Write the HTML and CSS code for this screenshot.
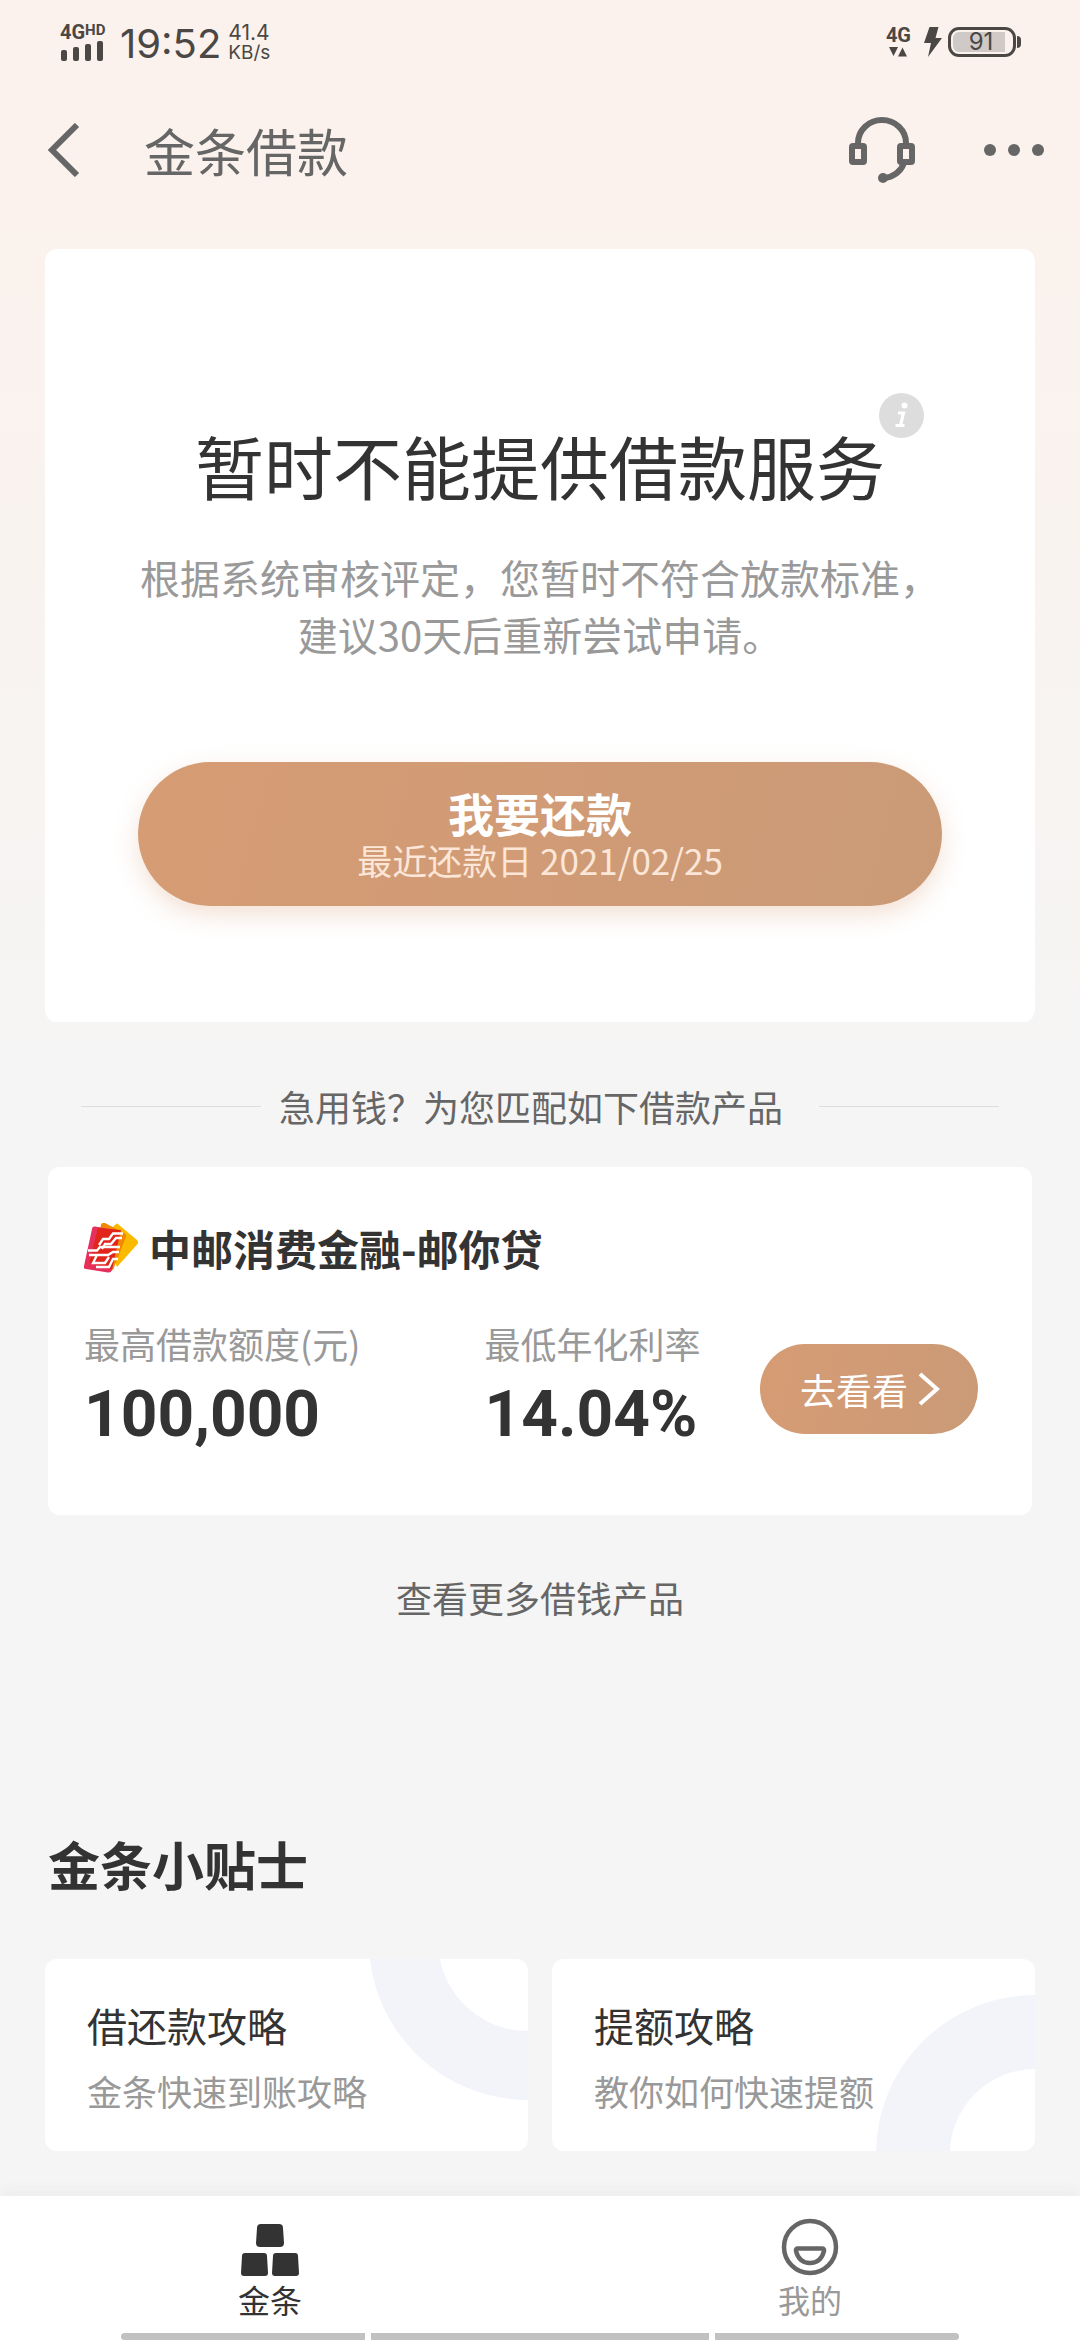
FILE: index.html
```html
<!DOCTYPE html>
<html lang="zh-CN">
<head>
<meta charset="utf-8">
<meta name="viewport" content="width=device-width, initial-scale=1">
<title>金条借款</title>
<link rel="stylesheet" href="styles.css">
</head>
<body>
<div class="page">
  <div class="status">
    <div class="signal">
      <div class="signal-net">4G<span class="signal-hd">HD</span></div>
      <svg class="signal-bars" width="44" height="20" viewBox="0 0 44 20" fill="#4a4745" aria-hidden="true">
        <rect x="1" y="9" width="6" height="11" rx="2"/><rect x="13" y="6" width="6" height="14" rx="2"/><rect x="25" y="3" width="6" height="17" rx="2"/><rect x="37" y="0" width="6" height="20" rx="2"/>
      </svg>
    </div>
    <time class="clock">19:52</time>
    <div class="speed"><span class="speed-value">41.4</span><span>KB/s</span></div>
    <div class="status-right">
      <div class="data">
        <span>4G</span>
        <svg width="18" height="10" viewBox="0 0 18 10" fill="#4a4745" aria-hidden="true"><path d="M0 0h9l-4.500 9zM9 9.500h9l-4.500-9z"/></svg>
      </div>
      <svg width="18" height="30" viewBox="0 0 18 30" fill="#4a4745" aria-hidden="true"><path d="M5.500 0h9L11.500 11H18L4 30 7 16H0z"/></svg>
      <div class="battery"><span class="battery-level">91</span></div>
    </div>
  </div>

  <header class="header">
    <button class="icon-btn" aria-label="返回">
      <svg width="32" height="54" viewBox="0 0 32 54" fill="none" stroke="#666" stroke-width="6"><path d="M29 2 4 27 29 52"/></svg>
    </button>
    <h1 class="header-title">金条借款</h1>
    <div class="header-actions">
      <button class="icon-btn" aria-label="客服">
        <svg width="66" height="66" viewBox="0 0 66 66" fill="none" stroke="#666" stroke-width="6">
          <path d="M9 29v-3a24 23 0 0 1 48 0v3"/>
          <rect x="3" y="29" width="12" height="16" rx="1"/><rect x="51" y="29" width="12" height="16" rx="1"/>
          <path d="M55 46c-3 8-10 14-21 15.500"/><circle cx="34" cy="61" r="5" fill="#666" stroke="none"/>
        </svg>
      </button>
      <button class="icon-btn" aria-label="更多">
        <svg width="60" height="12" viewBox="0 0 60 12" fill="#666"><circle cx="6" cy="6" r="6"/><circle cx="30" cy="6" r="6"/><circle cx="54" cy="6" r="6"/></svg>
      </button>
    </div>
  </header>

  <main class="main">
    <section class="hero">
      <h2 class="hero-title">暂时不能提供借款服务<button class="info" aria-label="说明">
        <svg width="45" height="45" viewBox="0 0 45 45" aria-hidden="true"><circle cx="22.500" cy="22.500" r="22.500" fill="#ddd"/><circle cx="25.500" cy="12.500" r="3" fill="#fff"/><path d="M19 20h5.500l-3 12.500M16.500 32.500h9" fill="none" stroke="#fff" stroke-width="3.200"/></svg>
      </button></h2>
      <p class="hero-desc">根据系统审核评定，您暂时不符合放款标准，<br>建议30天后重新尝试申请。</p>
      <button class="repay"><strong class="repay-title">我要还款</strong><span class="repay-date">最近还款日 2021/02/25</span></button>
    </section>

    <p class="divider">急用钱？为您匹配如下借款产品</p>

    <section class="product">
      <h3 class="product-name">
        <svg width="55" height="50" viewBox="0 0 55 50" aria-hidden="true">
          <path d="M31 2q2-3 4 0L53 17q2 2 .500 4L33 44 20 12z" fill="#fbba00"/>
          <path d="M17 2q1-3 4-2l19 10q3 1 2 4L29 47 8 40z" fill="#f18a00"/>
          <path d="M8 6q0-3 3-2.500l24 4L28 47q-1 3-4 2.500L2 46q-3 0-2-3z" fill="#e4305a"/>
          <path d="M14 5l23 2L28 46 8 41q-3-1-2-4z" fill="#e1251b"/>
          <path d="M39 10.500H29l-4 5.500h-6l-4 6M38 15h-6l-5 6h-6l-3 5M4 27.500h9l3-3.500h20M5 32h19l5-3h6M13 32l-4 8h12l4-6M12 44h13l4-8h5" fill="none" stroke="#fff" stroke-width="2.300"/>
        </svg>
        中邮消费金融-邮你贷
      </h3>
      <div class="product-body">
        <dl class="stat"><dt>最高借款额度(元)</dt><dd>100,000</dd></dl>
        <dl class="stat"><dt>最低年化利率</dt><dd>14.04%</dd></dl>
        <button class="go">去看看
          <svg width="22" height="34" viewBox="0 0 22 34" fill="none" stroke="#fff" stroke-width="4" aria-hidden="true"><path d="M2 2l17 15L2 32"/></svg>
        </button>
      </div>
    </section>

    <a class="more" href="#">查看更多借钱产品</a>

    <h2 class="section-title">金条小贴士</h2>
    <div class="tips">
      <a class="tip" href="#">
        <svg class="tip-art" width="160" height="192" viewBox="0 0 160 192" fill="none" stroke="#f3f4fa" aria-hidden="true"><circle cx="160" cy="-18" r="124.500" stroke-width="69"/></svg>
        <span class="tip-title">借还款攻略</span><span class="tip-desc">金条快速到账攻略</span>
      </a>
      <a class="tip" href="#">
        <svg class="tip-art" width="160" height="192" viewBox="0 0 160 192" fill="none" stroke="#f3f4fa" aria-hidden="true"><circle cx="160" cy="195" r="122" stroke-width="74"/></svg>
        <span class="tip-title">提额攻略</span><span class="tip-desc">教你如何快速提额</span>
      </a>
    </div>
  </main>

  <footer class="footer">
    <nav class="tabs">
      <a class="tab tab-active" href="#" aria-current="page">
        <svg width="60" height="60" viewBox="0 0 60 60" fill="#333" aria-hidden="true">
          <path d="M21 8h18q4 0 4 4l1 15q0 4-4 4H20q-4 0-4-4l1-15q0-4 4-4zM5 37h19q3 0 3 3l1 17q0 3-3 3H4q-3 0-3-3l1-17q0-3 3-3zM36 37h19q3 0 3 3l1 17q0 3-3 3H35q-3 0-3-3l1-17q0-3 3-3z"/>
        </svg>
        金条
      </a>
      <a class="tab" href="#">
        <svg width="60" height="60" viewBox="0 0 60 60" fill="none" stroke="#666" stroke-width="4.500" stroke-linejoin="round" aria-hidden="true">
          <circle cx="30" cy="31" r="26"/><path d="M18 32.500h24q2.500 0 2 2.500-3 12-14 12T16 35q-.5-2.500 2-2.500z"/>
        </svg>
        我的
      </a>
    </nav>
    <div class="gesture" aria-hidden="true"><span></span><span></span><span></span></div>
  </footer>
</div>
</body>
</html>
```
FILE: styles.css
```css
* { box-sizing: border-box; }

body {
  margin: 0;
  font-family: "Noto Sans CJK SC", "Noto Sans", sans-serif;
  color: #333;
  background: #f5f5f5;
}

h1, h2, h3, p, dl, dd { margin: 0; font-weight: 400; }
a { color: inherit; text-decoration: none; }
button { border: 0; padding: 0; margin: 0; background: none; font: inherit; color: inherit; cursor: pointer; }
svg { display: block; flex: none; }

.page {
  min-height: 100vh;
  display: flex;
  flex-direction: column;
  background: linear-gradient(#fbf2ed 0, #fbf2ed 216px, #f5f5f5 1120px);
}

/* Status bar */
.status {
  display: flex;
  align-items: center;
  height: 84px;
  padding: 0 64px 0 60px;
  font-family: Inter, sans-serif;
  color: #4a4745;
}
.signal { display: flex; flex-direction: column; gap: 1px; width: 48px; }
.signal-net { display: flex; font: 700 20px/16px Roboto, sans-serif; }
.signal-hd { font-size: 15px; line-height: 12px; }
.clock { margin: 4px 0 0 12px; font-size: 40px; line-height: 48px; }
.speed { display: flex; flex-direction: column; margin: 2px 0 0 7px; font-size: 19px; line-height: 20px; }
.speed-value { font-size: 21px; }
.status-right { display: flex; align-items: center; gap: 13px; margin-left: auto; }
.data { display: flex; flex-direction: column; align-items: center; gap: 4px; font: 700 20px/16px Roboto, sans-serif; }
.battery {
  position: relative;
  width: 68px;
  height: 30px;
  margin-left: -7px;
  padding: 2px 8px 2px 2px;
  border: 3px solid #4a4745;
  border-radius: 11px;
}
.battery::after {
  content: "";
  position: absolute;
  left: 66px;
  top: 6px;
  width: 4px;
  height: 12px;
  border-radius: 0 4px 4px 0;
  background: #4a4745;
}
.battery-level {
  display: block;
  height: 20px;
  padding-left: 4px;
  border-radius: 6px 0 0 6px;
  background: #cfcac7;
  font-size: 24px;
  line-height: 20px;
  text-align: center;
}

/* Title bar */
.header {
  display: flex;
  align-items: center;
  height: 132px;
  padding: 0 36px 0 48px;
  color: #666;
}
.icon-btn { flex: none; }
.header-title { margin-left: 64px; font-size: 51px; line-height: 72px; }
.header-actions { display: flex; align-items: center; gap: 69px; margin-left: auto; }

.main { flex: 1; display: flex; flex-direction: column; padding: 33px 45px 45px; }

/* Main notice */
.hero {
  display: flex;
  flex-direction: column;
  align-items: center;
  padding: 166px 93px 116px;
  border-radius: 12px;
  background: #fff;
}
.hero-title { position: relative; font-size: 69px; line-height: 100px; white-space: nowrap; }
.info { position: absolute; left: calc(100% - 6px); top: -22px; }
.hero-desc { margin-top: 34px; font-size: 40px; line-height: 57px; color: #999; text-align: center; white-space: nowrap; }
.repay {
  display: flex;
  flex-direction: column;
  align-items: center;
  justify-content: center;
  align-self: stretch;
  height: 144px;
  margin-top: 99px;
  border-radius: 72px;
  background: linear-gradient(105deg, #d69c74, #ca9a77);
  box-shadow: 0 9px 24px rgba(214, 156, 116, .3);
  color: #fff;
}
.repay-title { font-size: 46px; line-height: 52px; }
.repay-date { font-size: 35px; line-height: 44px; color: #fbe6d8; }

/* Caption between two rules */
.divider {
  display: flex;
  align-items: center;
  margin: 57px 36px 34px;
  font-size: 36px;
  line-height: 54px;
  color: #666;
}
.divider::before, .divider::after { content: ""; flex: 1; height: 1px; background: #ddd; }
.divider::before { margin-right: 18px; }
.divider::after { margin-left: 36px; }

/* Product card */
.product { margin: 0 3px; padding: 54px 54px 64px 36px; border-radius: 12px; background: #fff; }
.product-name { display: flex; align-items: center; gap: 10px; font-size: 42px; line-height: 54px; font-weight: 700; }
.product-body { display: grid; grid-template-columns: 16fr 11fr auto; align-items: center; margin-top: 43px; }
.stat dt { font-size: 36px; line-height: 50px; color: #999; white-space: nowrap; }
.stat dd { margin-top: 11px; font: 700 64px/72px Roboto, sans-serif; }
.go {
  display: flex;
  align-items: center;
  gap: 10px;
  height: 90px;
  margin-top: 9px;
  padding: 0 38px 0 40px;
  border-radius: 45px;
  background: linear-gradient(105deg, #d69c74, #ca9a77);
  font-size: 36px;
  color: #fff;
}

.more { align-self: center; margin-top: 55px; font-size: 36px; line-height: 54px; color: #666; }

/* Tips */
.section-title { margin: 201px 3px 56px; font-size: 52px; line-height: 78px; font-weight: 700; }
.tips { display: grid; grid-template-columns: 1fr 1fr; gap: 24px; }
.tip {
  position: relative;
  display: flex;
  flex-direction: column;
  gap: 11px;
  padding: 36px 42px 35px;
  border-radius: 12px;
  background: #fff;
  overflow: hidden;
}
.tip-art { position: absolute; right: 0; top: 0; }
.tip-title { position: relative; font-size: 40px; line-height: 60px; }
.tip-desc { position: relative; font-size: 35px; line-height: 50px; color: #999; }

/* Bottom tabs */
.footer { background: #fff; box-shadow: 0 -3px 15px rgba(60, 70, 90, .06); }
.tabs { display: grid; grid-template-columns: 1fr 1fr; padding: 20px 0 11px; }
.tab { display: flex; flex-direction: column; align-items: center; font-size: 32px; line-height: 46px; color: #999; }
.tab-active { color: #333; }
.gesture { display: grid; grid-template-columns: 244fr 338fr 244fr; gap: 6px; padding: 0 121px; }
.gesture span { height: 7px; background: #c1c1c1; }
.gesture span:first-child { border-radius: 4px 0 0 4px; }
.gesture span:last-child { border-radius: 0 4px 4px 0; }
```
